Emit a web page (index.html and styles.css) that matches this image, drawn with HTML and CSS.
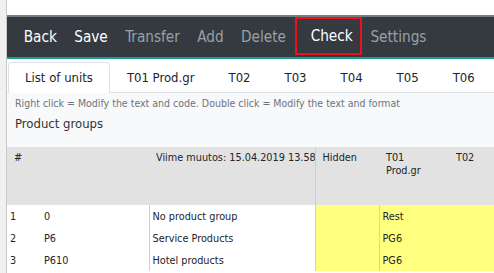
FILE: index.html
```html
<!DOCTYPE html>
<html lang="en">
<head>
  <meta charset="UTF-8">
  <title>Product groups</title>
  <link rel="stylesheet" href="styles.css">
</head>
<body>
  <div class="side"></div>
  <div class="page">
    <div class="navbar">
      <a class="nav on">Back</a>
      <a class="nav on">Save</a>
      <a class="nav">Transfer</a>
      <a class="nav">Add</a>
      <a class="nav">Delete</a>
      <a class="nav on marked">Check</a>
      <a class="nav">Settings</a>
    </div>

    <div class="tabs">
      <span class="tab active">List of units</span>
      <span class="tab">T01 Prod.gr</span>
      <span class="tab">T02</span>
      <span class="tab">T03</span>
      <span class="tab">T04</span>
      <span class="tab">T05</span>
      <span class="tab">T06</span>
    </div>

    <div class="panel">
      <p class="hint">Right click = Modify the text and code. Double click = Modify the text and format</p>
      <h2>Product groups</h2>
    </div>

    <table class="grid">
      <colgroup>
        <col class="c-num">
        <col class="c-code">
        <col class="c-name">
        <col class="c-hid">
        <col class="c-t01">
        <col class="c-t02">
      </colgroup>
      <thead>
        <tr>
          <th>#</th>
          <th></th>
          <th><div class="clip">Viime muutos: 15.04.2019 13.58.32</div></th>
          <th class="sep">Hidden</th>
          <th>T01<br>Prod.gr</th>
          <th>T02</th>
        </tr>
      </thead>
      <tbody>
        <tr>
          <td>1</td><td>0</td><td class="sep">No product group</td>
          <td class="yel sep"></td><td class="yel sep">Rest</td><td class="yel"></td>
        </tr>
        <tr>
          <td>2</td><td>P6</td><td class="sep">Service Products</td>
          <td class="yel sep"></td><td class="yel sep">PG6</td><td class="yel"></td>
        </tr>
        <tr>
          <td>3</td><td>P610</td><td class="sep">Hotel products</td>
          <td class="yel sep"></td><td class="yel sep">PG6</td><td class="yel"></td>
        </tr>
      </tbody>
    </table>
  </div>
</body>
</html>
```

FILE: styles.css
```css
html,
body {
  margin: 0;
  padding: 0;
}
body {
  display: flex;
  width: 494px;
  height: 273px;
  overflow: hidden;
  font-family: "DejaVu Sans Condensed", "DejaVu Sans", sans-serif;
  font-stretch: condensed;
  color: #212529;
  background: #fff;
}
.side {
  flex: 0 0 6px;
  background: #f0f0f0;
  border-right: 1px solid #c9c9c9;
}
.page {
  flex: 1;
  min-width: 0;
  padding-top: 15px;
  overflow: hidden;
}
.navbar {
  display: flex;
  align-items: center;
  height: 40px;
  padding: 0 0 0 8px;
  background: #343a40;
  border-top: 2px solid #737d83;
  border-bottom: 2px solid #17a08e;
}
.nav {
  padding: 0 8.7px;
  font-size: 15.2px;
  color: #9ba0a5;
}
.nav.on {
  color: #fff;
}
.nav.marked {
  align-self: flex-start;
  display: flex;
  align-items: center;
  height: 34px;
  padding: 0 7px 0 14px;
  border: 2px solid #e8141a;
}
.tabs {
  display: flex;
  height: 34px;
  padding: 0 0 0 1px;
  border-bottom: 1px solid #dee2e6;
  box-sizing: border-box;
  align-items: flex-end;
}
.tab {
  padding: 0 17px;
  height: 30px;
  line-height: 30px;
  font-size: 13px;
  margin-bottom: -1px;
  white-space: nowrap;
}
.tab.active {
  padding: 0 16px;
  height: 30px;
  border: 1px solid #dee2e6;
  border-bottom: 0;
  border-radius: 4px 4px 0 0;
  background: #fff;
}
.panel {
  background: #f8f9fa;
  height: 54px;
  padding: 4px 8px 0;
  box-sizing: border-box;
}
.hint {
  margin: 0;
  font-size: 10.5px;
  color: #6c757d;
  white-space: nowrap;
}
h2 {
  margin: 7px 0 0;
  font-size: 13px;
  font-weight: normal;
  color: #333;
}
.grid {
  table-layout: fixed;
  border-collapse: collapse;
  width: 510px;
  font-size: 10.8px;
}
.c-num { width: 34px; }
.c-code { width: 108px; }
.c-name { width: 166px; }
.c-hid { width: 64px; }
.c-t01 { width: 70px; }
.c-t02 { width: 68px; }
.grid th {
  height: 58px;
  padding: 4px 7px 0;
  vertical-align: top;
  text-align: left;
  font-weight: normal;
  background: #e2e2e2;
  white-space: nowrap;
  overflow: hidden;
  box-sizing: border-box;
}
.clip {
  width: 159px;
  overflow: hidden;
}
.grid td {
  height: 22px;
  padding: 0 3px;
  white-space: nowrap;
  overflow: hidden;
}
.grid .sep {
  border-left: 1px solid #cfcfcf;
}
.grid .yel {
  background: #ffff80;
}
```
